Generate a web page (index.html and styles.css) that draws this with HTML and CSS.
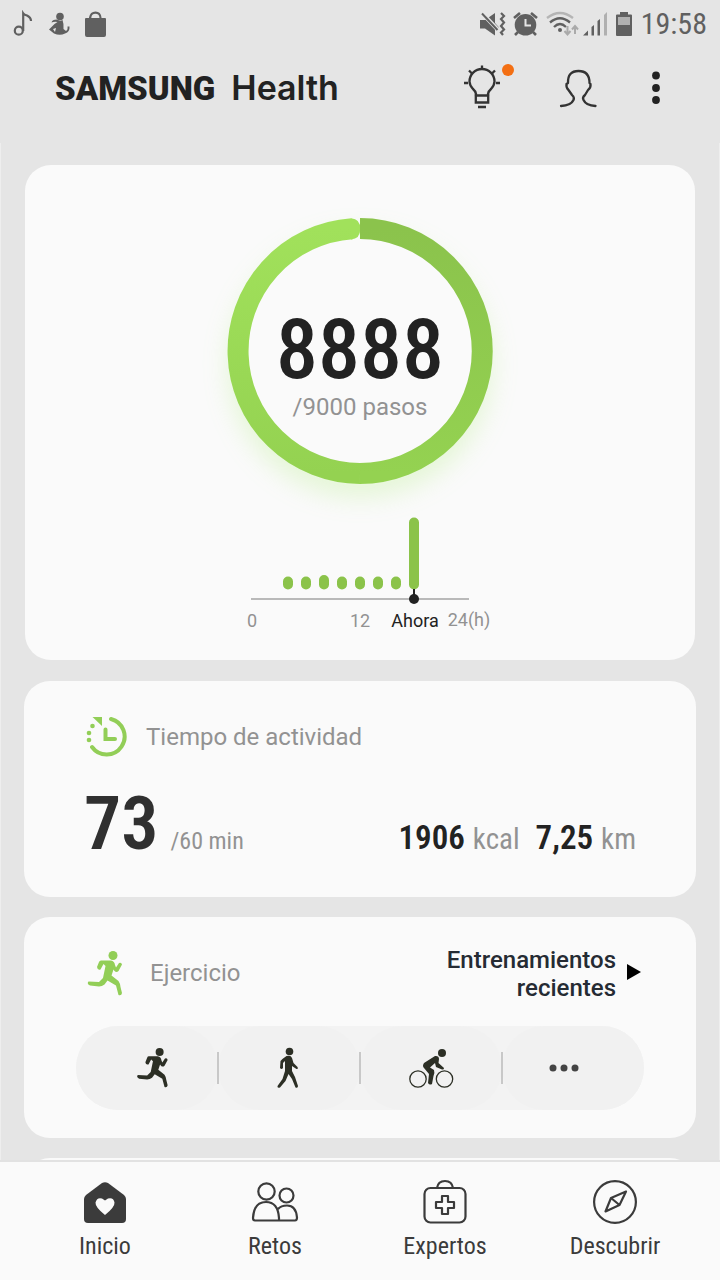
FILE: index.html
```html
<!DOCTYPE html>
<html lang="es">
<head>
<meta charset="utf-8">
<meta name="viewport" content="width=device-width, initial-scale=1">
<title>Samsung Health</title>
<link rel="stylesheet" href="styles.css">
</head>
<body>
<svg class="defs" width="0" height="0" aria-hidden="true">
  <symbol id="runner" viewBox="0 0 36 46">
    <circle cx="26" cy="5.500" r="4.500"/>
    <path d="M14 10.500H24Q27.500 11 28 15L29 17.500 32 13Q34.500 12 35 14.500L31.500 21Q29.500 23 27.500 21L26.500 19.500 24.500 25.500 31.500 31Q33 33 33.500 37L35 43Q34.500 46 31.500 45L29 35.500 20.500 30.500 17.500 34.500Q15 36.500 12 36.500L3 35.500Q-0.500 34 1.500 31.500L12 32 16 28 18.500 16 16.500 14 13.500 19.500Q10.500 20.500 10 17L12 12Q12.500 10.500 14 10.500Z"/>
  </symbol>
</svg>

<div class="status">
  <div class="status-group">
    <svg width="96" height="28" viewBox="12 10 96 28" fill="#606060">
      <g fill="none" stroke="#606060" stroke-width="2.200"><circle cx="18.800" cy="30.700" r="4"/><path d="M23.200 31V13.300Q24 14.500 27 15.500 31 17.500 31 21"/></g>
      <circle cx="60" cy="16.500" r="3.800"/>
      <path d="M57 19.500Q60 21.500 62.500 20 64 24 63.500 29L66 31Q68 30 67.500 26.500H69.500Q70 32 65 33.500 60 36 54 33.500L49 29.500 54.500 24 57.500 22Q54 21.500 51.500 22.500 52 19.500 57 19.500ZM53 29 55 32 56 28Z" fill-rule="evenodd"/>
      <path d="M86 18H89V17.500Q90 11.500 95.500 11.500T101.500 17.500V18H105Q106 18 106 19V35Q106 37 104 37H87Q85 37 85 35V19Q85 18 86 18ZM91.300 18H99.500Q99.300 13.800 95.400 13.800T91.300 18Z" fill-rule="evenodd"/>
    </svg>
  </div>
  <div class="status-group">
    <svg width="154" height="28" viewBox="479 10 154 28" fill="#606060">
      <path d="M480 20H485L495 13V23L499 27.500 495 29V35.500L485 28.500H480Z"/>
      <path d="M481 12 499 31" stroke="#e5e5e5" stroke-width="4"/>
      <path d="M482 13.500 497.500 30" stroke="#606060" stroke-width="2"/>
      <path d="M501 13 504 16 501 19 504 22.500 501 26 504 29.500 501 32.500 503 35" fill="none" stroke="#606060" stroke-width="2.200"/>
      <circle cx="525.500" cy="24.800" r="10.800"/><path d="M514 18 520 13M531 13 537 18M518 32 515 35M533 32 536 35" stroke="#606060" stroke-width="2.600"/>
      <path d="M525.500 19V25.500H531" fill="none" stroke="#e5e5e5" stroke-width="2"/>
      <g fill="none" stroke-width="2.300"><path d="M547 18Q560 8 573 18" stroke="#b5b5b5"/><path d="M550 22.500Q560 14 570 22.500M554 27Q560 21 566 27" stroke="#606060"/><path d="M567.500 26V34M564.500 31 567.500 34.500 570.500 31M575 34V26M572 29.500 575 26 578 29.500" stroke="#aaa" stroke-width="2"/></g>
      <circle cx="560" cy="30" r="2"/>
      <path d="M583 35.500 588 30.500V35.500ZM591.500 27 594 25V35.500H591.500ZM597.500 21 600 19V35.500H597.500Z"/><path d="M604 15 607 12V35.500H604Z" fill="#b0b0b0"/>
      <path d="M620 12H628V14.500H631Q632 14.500 632 15.500V35Q632 36 631 36H617Q616 36 616 35V15.500Q616 14.500 617 14.500H620Z"/><path d="M618 17H630V25H618Z" fill="#b0b0b0"/>
    </svg>
    <time class="clock">19:58</time>
  </div>
</div>

<header class="header">
  <h1 class="brand"><span class="brand-maker">SAMSUNG</span> <span class="brand-app">Health</span></h1>
  <div class="actions">
    <button class="icon-button" type="button" aria-label="Consejos">
      <svg width="54" height="48" viewBox="462 64 54 48" fill="none" stroke="#333" stroke-width="2.300">
        <path d="M476 95.500V94Q475.500 91 473 89 469.500 85 469.500 81.500A12.500 12.500 0 0 1 494.500 81.500Q494.500 85 491 89 488.500 91 488 94V95.500"/>
        <path d="M475.800 95.500H488.200V102.500H475.800ZM478 107H486M482 65.500V69.500M469 70.500 472 73.500M495 70.500 492 73.500M464 83H468M496 83H500"/>
        <circle cx="508" cy="70" r="6" fill="#f36f13" stroke="none"/>
      </svg>
    </button>
    <button class="icon-button" type="button" aria-label="Perfil">
      <svg width="48" height="48" viewBox="558 64 48 48" fill="none" stroke="#333" stroke-width="2.300" stroke-linecap="round" stroke-linejoin="round">
        <path d="M561 106Q571 105.500 573.500 100 574.800 97.500 572 95L568.500 90Q566 88 566.500 84L568 83Q567.500 71 578.500 71T589.500 83L590.500 84Q591 88 588 90L585 95Q582 97.500 583.500 100 586 105.500 595.500 106"/>
      </svg>
    </button>
    <button class="icon-button" type="button" aria-label="Más opciones">
      <svg width="16" height="40" viewBox="648 68 16 40" fill="#222"><circle cx="656" cy="75.500" r="3.900"/><circle cx="656" cy="88" r="3.900"/><circle cx="656" cy="100" r="3.900"/></svg>
    </button>
  </div>
</header>

<main class="feed">
  <section class="card steps">
    <div class="ring">
      <svg class="ring-art" width="300" height="300" viewBox="0 0 300 300" fill="none" stroke-width="21">
        <defs>
          <linearGradient id="rise" x1="0" y1="1" x2="0" y2="0"><stop offset="0" stop-color="#94d251"/><stop offset="1" stop-color="#a1e15b"/></linearGradient>
          <linearGradient id="fall" x1="0" y1="0" x2="0" y2="1"><stop offset="0" stop-color="#8bc34c"/><stop offset="1" stop-color="#94d251"/></linearGradient>
        </defs>
        <circle cx="150" cy="150" r="116" fill="#fafafa"/>
        <path d="M150 272.500A122.500 122.500 0 0 1 142 27.800" stroke="url(#rise)"/>
        <path d="M141 17.300Q150.500 18 150.300 28T141 38.400Z" fill="#a1e15b" stroke="none"/>
        <path d="M150 27.500A122.500 122.500 0 0 1 149.500 272.500" stroke="url(#fall)"/>
      </svg>
      <div class="ring-text">
        <strong class="count">8888</strong>
        <span class="label">/9000 pasos</span>
      </div>
    </div>
    <svg class="chart" width="280" height="140" viewBox="220 501 280 140" role="img" aria-label="Pasos por hora">
      <g stroke="#8bc34a" stroke-width="10" stroke-linecap="round">
        <path d="M288 581.500V584.500M306 581.500V584.500M324 580V584.500M342 581.500V584.500M360 581.500V584.500M378 581.500V584.500M396 581.500V584.500M414 522.500V584.500"/>
      </g>
      <path d="M251 599H469" stroke="#b9b9b9" stroke-width="2"/>
      <path d="M414 589V599" stroke="#222" stroke-width="2"/><circle cx="414" cy="599" r="5" fill="#222"/>
      <text class="tick" x="252" y="627">0</text>
      <text class="tick" x="360" y="627">12</text>
      <text class="tick now" x="415" y="627">Ahora</text>
      <text class="tick" x="469" y="626">24(h)</text>
    </svg>
  </section>

  <section class="card activity">
    <div class="title-row">
      <svg width="44" height="44" viewBox="84 714 44 44" fill="#92ce57">
        <path d="M111 718A18 18 0 1 1 92 746" fill="none" stroke="#92ce57" stroke-width="4" stroke-linecap="round"/>
        <path d="M105.500 728.500V738H115" fill="none" stroke="#92ce57" stroke-width="4" stroke-linecap="round"/>
        <path d="M92.500 716H102V725Z"/><circle cx="92.500" cy="725" r="2.300"/><circle cx="89" cy="732" r="2.300"/><circle cx="89" cy="739" r="2.300"/>
      </svg>
      <h2 class="label">Tiempo de actividad</h2>
    </div>
    <div class="figures">
      <div class="minutes"><strong class="big">73</strong> <span class="goal">/60 min</span></div>
      <div class="totals">
        <span class="total"><strong class="value">1906</strong> <span class="unit">kcal</span></span>
        <span class="total"><strong class="value">7,25</strong> <span class="unit">km</span></span>
      </div>
    </div>
  </section>

  <section class="card exercise">
    <div class="exercise-head">
      <div class="title-row">
        <svg width="48" height="46" viewBox="-2 0 48 46" fill="#92ce57"><use href="#runner" width="36" height="46"/></svg>
        <h2 class="label">Ejercicio</h2>
      </div>
      <a class="recent" href="#recientes"><span>Entrenamientos<br>recientes</span>
        <svg width="16" height="20" viewBox="0 0 16 20"><path d="M1 1 15 9 1 17Z"/></svg>
      </a>
    </div>
    <div class="sports">
      <button class="sport" type="button" aria-label="Correr"><svg width="60" height="42" viewBox="-19 0 60 42" fill="#2c2f25"><use href="#runner" x="0" y="0" width="33" height="41"/></svg></button>
      <button class="sport" type="button" aria-label="Caminar">
        <svg width="28" height="42" viewBox="276 1047 28 42" fill="#2c2f25"><circle cx="290.500" cy="1051.500" r="3.800"/><path d="M287.500 1056Q292 1055 293 1058L294.500 1063 298.500 1067Q299.500 1069 297.500 1069L293 1066V1071L296 1077 299 1086Q299 1088.500 296.500 1087.500L293 1079 289.500 1074 286.500 1081 281 1087.500Q278 1088.500 278.500 1086L283.500 1079 286 1071V1061L284 1063V1068Q282.500 1070 281 1068L281.500 1061Q283 1059 287.500 1056Z"/></svg>
      </button>
      <button class="sport" type="button" aria-label="Bicicleta">
        <svg width="46" height="42" viewBox="408 1047 46 42" fill="#2c2f25"><g fill="none" stroke="#2c2f25" stroke-width="1.300"><circle cx="418" cy="1079" r="8.200"/><circle cx="444.500" cy="1079" r="8.200"/></g><circle cx="442" cy="1053" r="4"/><path d="M435 1056Q439 1055.500 439 1059L438.500 1063 444 1068Q444 1070 442 1069.500L436 1067 435 1063 430 1067.500 434 1070Q435 1073 433.500 1076L432 1084Q429.500 1085.500 428 1083L429 1074 424 1068Q422 1066 424 1063Z"/></svg>
      </button>
      <button class="sport" type="button" aria-label="Más ejercicios">
        <svg width="48" height="42" viewBox="548 1047 48 42" fill="#444"><circle cx="552" cy="1068" r="3.500"/><circle cx="563" cy="1068" r="3.500"/><circle cx="574" cy="1068" r="3.500"/></svg>
      </button>
    </div>
  </section>

  <section class="card"></section>
</main>

<nav class="tabs">
  <a class="tab" href="#inicio" aria-current="page">
    <svg width="48" height="48" viewBox="81 1178 48 48"><path d="M102 1183Q105 1181.500 108 1183L124 1195Q126 1197 126 1199V1219Q126 1223 122 1223H88Q84 1223 84 1219V1199Q84 1197 86 1195Z" fill="#3b3b3b"/><path d="M105 1215Q95 1207 95.500 1202.500 97 1197 102 1198.500L105 1200.500 108 1198.500Q113.500 1197 114.500 1202.500 115 1207 105 1215Z" fill="#fafafa"/></svg>
    <span>Inicio</span>
  </a>
  <a class="tab" href="#retos">
    <svg width="48" height="48" viewBox="251 1178 48 48" fill="none" stroke="#3b3b3b" stroke-width="2.200" stroke-linejoin="round"><circle cx="266.500" cy="1191.500" r="8.200"/><circle cx="286.500" cy="1195.500" r="7"/><path d="M255 1220.500Q253 1220.500 253 1218 254 1202 266 1202T279 1218V1220.500ZM279 1220.500H295Q297 1220.500 297 1217.500 296 1205.500 287 1205.500 281 1205.500 278 1209"/></svg>
    <span>Retos</span>
  </a>
  <a class="tab" href="#expertos">
    <svg width="48" height="48" viewBox="421 1178 48 48" fill="none" stroke="#3b3b3b" stroke-width="2.200"><rect x="424.500" y="1188" width="41" height="34.500" rx="6"/><path d="M437 1188Q438 1181 445 1181T453 1188M442 1196H448V1202H454V1208H448V1214H442V1208H436V1202H442Z" stroke-linejoin="round"/></svg>
    <span>Expertos</span>
  </a>
  <a class="tab" href="#descubrir">
    <svg width="48" height="48" viewBox="591 1178 48 48" fill="none" stroke="#3b3b3b" stroke-width="2.200" stroke-linejoin="round"><circle cx="615" cy="1202" r="20.900"/><path d="M626 1191.500 611 1198 605.500 1211.500 619.500 1205ZM611 1198 619.500 1205"/></svg>
    <span>Descubrir</span>
  </a>
</nav>
</body>
</html>
```
FILE: styles.css
```css
* { box-sizing: border-box; }

body {
  margin: 0;
  height: 100vh;
  display: flex;
  flex-direction: column;
  overflow: hidden;
  background: #e5e5e5;
  color: #222;
  font-family: Roboto, "Liberation Sans", sans-serif;
}

h1, h2 { margin: 0; font-weight: 400; }
button { border: 0; padding: 0; background: none; cursor: pointer; }
a { color: inherit; text-decoration: none; }
svg { display: block; flex: none; }
.defs { position: absolute; }

.status {
  display: flex;
  justify-content: space-between;
  align-items: center;
  height: 48px;
  padding: 0 13px 0 12px;
}
.status-group { display: flex; align-items: center; gap: 8px; }
.clock {
  color: #606060;
  font-family: "Roboto Condensed", Roboto, sans-serif;
  font-size: 30px;
  line-height: 50px;
}

.header {
  display: flex;
  justify-content: space-between;
  align-items: center;
  height: 80px;
  padding: 0 56px 0 55px;
}
.brand { display: flex; align-items: baseline; gap: 16px; line-height: 40px; }
.brand-maker { font-size: 33px; font-weight: 900; }
.brand-app { font-family: Inter, sans-serif; font-size: 34px; font-weight: 600; }
.actions { display: flex; align-items: center; gap: 42px; }

.feed {
  flex: 1;
  min-height: 0;
  overflow: hidden;
  display: flex;
  flex-direction: column;
  gap: 20px;
  margin-top: 15px;
  padding: 22px 23px 0;
  border: solid #eee;
  border-width: 0 1px;
}
.card { flex: none; min-height: 120px; border-radius: 26px; background: #fafafa; }
.label { color: #929292; font-size: 24px; line-height: 32px; }

.steps {
  display: flex;
  flex-direction: column;
  align-items: center;
  padding: 36px 0 19px;
  margin: 0 1px 1px;
}
.ring { display: grid; place-items: center; }
.ring > * { grid-area: 1 / 1; }
.ring-art { filter: drop-shadow(0 14px 12px rgba(150, 235, 80, 0.2)); }
.ring-text {
  z-index: 1;
  display: flex;
  flex-direction: column;
  align-items: center;
  padding-top: 30px;
}
.count, .big, .value { font-family: "Roboto Condensed", Roboto, sans-serif; }
.count { font-size: 84px; font-weight: 500; line-height: 82px; }
.tick { fill: #929292; font-size: 18px; text-anchor: middle; }
.now { fill: #222; }

.activity { padding: 34px 60px 33px; }
.title-row { display: flex; align-items: center; gap: 18px; }
.figures { display: flex; justify-content: space-between; align-items: baseline; padding-top: 25px; }
.minutes { display: flex; align-items: baseline; gap: 12px; }
.big { color: #303030; font-size: 74px; font-weight: 600; line-height: 80px; }
.goal, .unit { color: #929292; font-family: "Roboto Condensed", Roboto, sans-serif; }
.goal { font-size: 24px; }
.totals { display: flex; gap: 16px; }
.total { display: flex; align-items: baseline; gap: 8px; }
.value { font-size: 33px; font-weight: 600; }
.unit { font-size: 29px; }

.exercise { padding: 27px 52px 28px; }
.exercise-head { display: flex; justify-content: space-between; align-items: center; padding: 0 2px 0 9px; }
.exercise-head .title-row { gap: 17px; }
.recent {
  display: flex;
  align-items: center;
  gap: 10px;
  color: #252b33;
  font-size: 24px;
  font-weight: 500;
  line-height: 28px;
  text-align: right;
}
.recent span { padding-top: 2px; }
.sports { display: flex; margin-top: 24px; border-radius: 42px; background: #f3f3f3; }
.sport {
  position: relative;
  flex: 1;
  display: grid;
  place-items: center;
  height: 84px;
  border-radius: 42px;
  background: #f1f1f1;
}
.sport + .sport::before {
  content: "";
  position: absolute;
  left: -1px;
  top: 26px;
  width: 2px;
  height: 32px;
  background: #c8c8c8;
}

.tabs {
  display: flex;
  padding: 16px 20px 18px;
  border-top: 2px solid #e2e2e2;
  background: #fafafa;
}
.tab {
  flex: 1;
  display: flex;
  flex-direction: column;
  align-items: center;
  gap: 4px;
  color: #3b3b3b;
  font-family: "Roboto Condensed", Roboto, sans-serif;
  font-size: 24px;
  line-height: 32px;
}
```
